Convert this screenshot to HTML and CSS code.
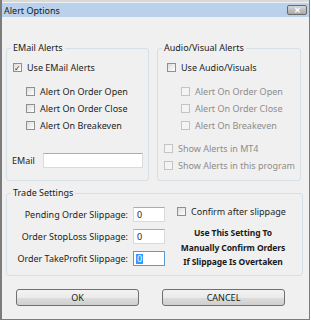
FILE: index.html
```html
<!DOCTYPE html>
<html lang="en">
<head>
  <meta charset="UTF-8" />
  <title>Alert Options</title>
  <link rel="stylesheet" href="styles.css">
</head>
<body>
  <div class="window">
    <div class="titlebar">
      <span class="title">Alert Options</span>
      <span class="close">&#10005;</span>
    </div>

    <div class="content">
      <div class="top-row">
        <fieldset class="group email-group">
          <legend>EMail Alerts</legend>
          <div class="row first"><span class="box checked">&#10003;</span>Use EMail Alerts</div>
          <div class="row sub gap-big"><span class="box"></span>Alert On Order Open</div>
          <div class="row sub"><span class="box"></span>Alert On Order Close</div>
          <div class="row sub"><span class="box"></span>Alert On Breakeven</div>
          <div class="row email-row"><span class="email-label">EMail</span><span class="field email-field"></span></div>
        </fieldset>

        <fieldset class="group audio-group">
          <legend>Audio/Visual Alerts</legend>
          <div class="row first"><span class="box"></span>Use Audio/Visuals</div>
          <div class="row sub gap-big disabled"><span class="box"></span>Alert On Order Open</div>
          <div class="row sub disabled"><span class="box"></span>Alert On Order Close</div>
          <div class="row sub disabled"><span class="box"></span>Alert On Breakeven</div>
          <div class="row show first-show disabled"><span class="box"></span>Show Alerts in MT4</div>
          <div class="row show disabled"><span class="box"></span>Show Alerts in this program</div>
        </fieldset>
      </div>

      <fieldset class="group trade-group">
        <legend>Trade Settings</legend>
        <div class="trade-body">
          <div class="slip-grid">
            <span class="slip-label">Pending Order Slippage:</span><span class="field slip-field">0</span>
            <span class="slip-label">Order StopLoss Slippage:</span><span class="field slip-field">0</span>
            <span class="slip-label">Order TakeProfit Slippage:</span><span class="field slip-field focused"><span class="sel">0</span></span>
          </div>
          <div class="confirm-col">
            <div class="row confirm-row"><span class="box"></span>Confirm after slippage</div>
            <p class="note">Use This Setting To<br>Manually Confirm Orders<br>If Slippage Is Overtaken</p>
          </div>
        </div>
      </fieldset>

      <div class="buttons">
        <button class="btn ok">OK</button>
        <button class="btn cancel">CANCEL</button>
      </div>
    </div>
  </div>
</body>
</html>
```

FILE: styles.css
```css
body {
  margin: 0;
  background: #ffffff;
  font-family: "Noto Sans", "Open Sans", sans-serif;
  font-size: 9px;
  color: #1e1e1e;
}

.window {
  width: 310px;
  height: 320px;
  box-sizing: border-box;
  border: 1px solid #7c7c7c;
  border-left-width: 2px;
  border-top: none;
  padding-top: 3px;
  background: #f0f0f0;
  box-shadow: inset 0 2px 0 #d8d8d8;
}

.titlebar {
  height: 14px;
  background: #b9d1ea;
  display: flex;
  align-items: center;
  justify-content: space-between;
  padding: 0 2px 0 2px;
}

.title {
  font-size: 9px;
  color: #1a1a1a;
}

.close {
  width: 20px;
  height: 10px;
  box-sizing: border-box;
  border: 1px solid #6a6a6a;
  border-radius: 2px;
  background: linear-gradient(#d6d6d6, #a9a9a9);
  color: #ffffff;
  font-size: 8px;
  font-weight: bold;
  line-height: 8px;
  text-align: center;
}

.content {
  padding: 25px 0 0 4px;
}

.top-row {
  display: flex;
  gap: 8px;
  height: 139px;
}

.group {
  margin: 0;
  min-width: 0;
  box-sizing: border-box;
  border: 1px solid #d5dfe5;
  border-radius: 3px;
  padding: 6px 0 0 0;
}

.group legend {
  padding: 0 2px;
  margin-left: 4px;
  line-height: 12px;
  color: #1a1a1a;
}

.email-group {
  width: 143px;
}

.audio-group {
  width: 144px;
}

.row {
  height: 14px;
  display: flex;
  align-items: center;
  white-space: nowrap;
}

.row.first {
  padding-left: 6px;
}

.row.sub {
  padding-left: 19px;
  margin-top: 3px;
}

.audio-group .row.first {
  padding-left: 9px;
}

.audio-group .row.sub {
  padding-left: 23px;
}

.row.gap-big {
  margin-top: 10px;
}

.row.show {
  padding-left: 6px;
  margin-top: 3px;
}

.row.first-show {
  margin-top: 9px;
}

.disabled {
  color: #8d8d8d;
}

.box {
  width: 9px;
  height: 9px;
  box-sizing: border-box;
  border: 1px solid #8e8f8f;
  background: linear-gradient(135deg, #dcdcdc, #ffffff);
  margin-right: 5px;
  font-size: 8px;
  line-height: 7px;
  text-align: center;
  color: #2b2b2b;
  flex-shrink: 0;
}

.disabled .box {
  border-color: #c4c4c4;
  background: #f4f4f4;
}

.email-row {
  height: 15px;
  margin-top: 21px;
  padding-left: 5px;
}

.email-label {
  width: 31px;
}

.field {
  height: 15px;
  box-sizing: border-box;
  border: 1px solid #d7dbe0;
  border-top-color: #abadb3;
  background: #ffffff;
  display: flex;
  align-items: center;
  padding-left: 3px;
}

.email-field {
  width: 100px;
}

.trade-group {
  margin-top: 6px;
  width: 297px;
  height: 89px;
  padding-top: 5px;
}

.trade-body {
  display: flex;
  align-items: flex-start;
}

.slip-grid {
  display: grid;
  grid-template-columns: 121px 32px;
  grid-auto-rows: 15px;
  align-content: start;
  column-gap: 5px;
  row-gap: 7px;
  margin-top: 3px;
  align-items: center;
}

.slip-label {
  text-align: right;
  white-space: nowrap;
}

.focused {
  border-color: #5d9ad2;
}

.sel {
  background: #3399ff;
  color: #ffffff;
  line-height: 10px;
  padding: 0 1px;
  margin-left: -1px;
}

.confirm-col {
  margin-left: 12px;
  width: 112px;
}

.confirm-row {
  height: 14px;
}

.note {
  margin: 8px 0 0 -3px;
  width: 118px;
  font-size: 8.5px;
  font-weight: bold;
  text-align: center;
  white-space: nowrap;
  letter-spacing: -0.1px;
  line-height: 14.5px;
  color: #1a1a1a;
}

.buttons {
  display: flex;
  gap: 23px;
  margin: 13px 0 0 10px;
}

.btn {
  width: 123px;
  height: 17px;
  padding: 0;
  border: 1px solid #707070;
  border-radius: 3px;
  background: linear-gradient(#f2f2f2 0%, #ebebeb 50%, #dddddd 51%, #cfcfcf 100%);
  font-family: "Noto Sans", "Open Sans", sans-serif;
  font-size: 9px;
  color: #1a1a1a;
}
```
